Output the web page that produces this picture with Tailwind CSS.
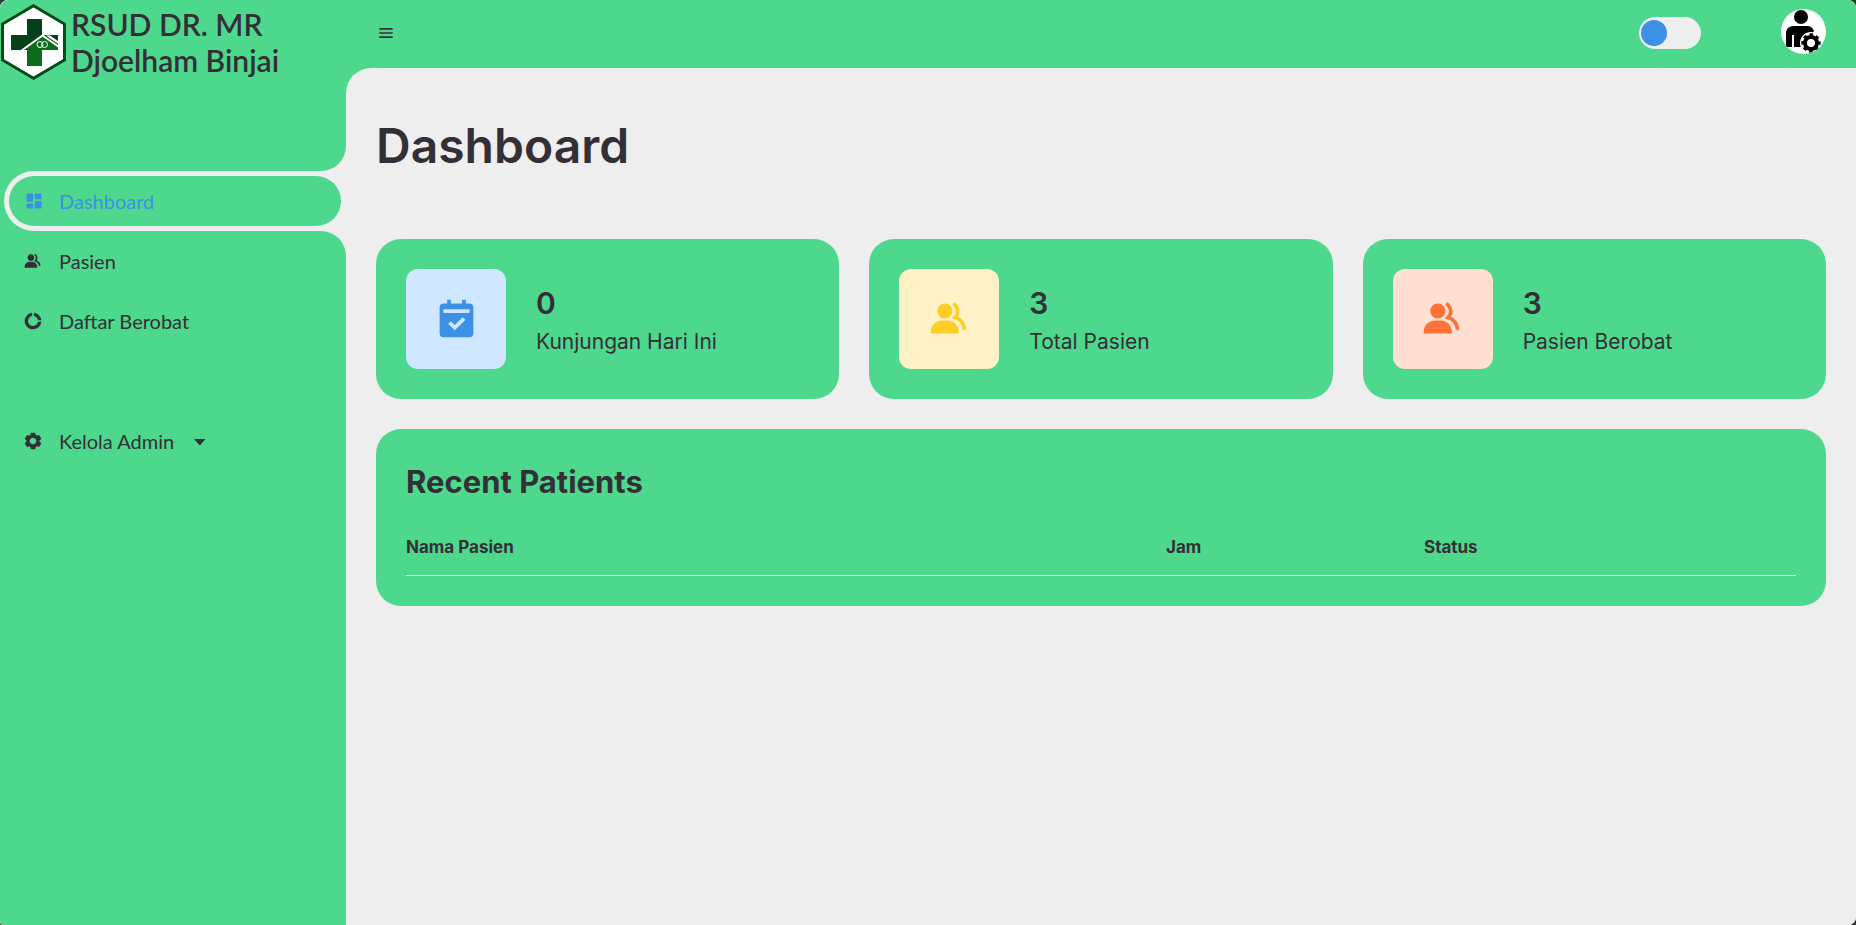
<!DOCTYPE html>
<html lang="id">
<head>
<meta charset="utf-8">
<meta name="viewport" content="width=device-width, initial-scale=1">
<title>Dashboard - RSUD DR. MR Djoelham Binjai</title>
<script src="https://cdn.jsdelivr.net/npm/@tailwindcss/browser@4"></script>
</head>
<body class="bg-[#333] text-[#342e37] font-[Inter,sans-serif]">
<svg class="hidden" aria-hidden="true">
  <symbol id="group" viewBox="0 0 24 24"><path d="M9.5 12c2.206 0 4-1.794 4-4s-1.794-4-4-4-4 1.794-4 4 1.794 4 4 4zm1.5 1H8c-3.309 0-6 2.691-6 6v1h15v-1c0-3.309-2.691-6-6-6z"/><path d="M16.604 11.048a5.67 5.67 0 0 0 .751-3.44c-.179-1.784-1.175-3.361-2.803-4.44l-1.105 1.666c1.119.742 1.8 1.799 1.918 2.974a3.693 3.693 0 0 1-1.072 2.986l-1.192 1.192 1.618.475C18.951 13.701 19 17.957 19 18h2c0-1.789-.956-5.285-4.396-6.952z"/></symbol>
</svg>
<div class="flex min-h-screen overflow-hidden rounded-lg rounded-bl-sm bg-[#eee]">

  <aside class="flex w-[346px] shrink-0 flex-col bg-[#eee] font-[Lato,sans-serif]">
    <div class="h-[171px] rounded-br-[25px] bg-[#4ed88d]">
      <a href="#" class="flex items-start gap-1 text-[30px] leading-9 font-semibold">
        <svg class="mt-1 h-[76px] w-[67px] shrink-0" viewBox="0 0 67 76" aria-hidden="true">
          <path d="M33.500 1.800 64.500 20V56L33.500 74.200 2.500 56V20Z" fill="#fff" stroke="#044a1b" stroke-width="3"/>
          <path d="M27 15H42V31H58V46H42V62H27V46H11V31H27Z" fill="#044018"/>
          <path d="M27 41 42 31 58 42V46H42V62H27Z" fill="#0a6d1b"/>
          <path d="M21 47 42.500 31.500 59 43" fill="none" stroke="#fff" stroke-width="2"/>
          <path d="M46 31.500H50L58 37V40Z" fill="#fff"/>
          <g fill="none" stroke="#fff" stroke-width="1"><circle cx="40" cy="40.500" r="3"/><circle cx="44.500" cy="40.500" r="3"/></g>
        </svg>
        <span class="pt-[6px]">RSUD DR. MR<br>Djoelham Binjai</span>
      </a>
    </div>
    <nav class="flex grow flex-col text-xl">
      <div class="bg-linear-to-r from-[#4ed88d] from-50% to-[#eee] to-50% pl-1">
        <div class="rounded-l-[30px] bg-[#eee] p-[5px]">
          <a href="#" aria-current="page" class="flex h-[50px] items-center gap-[15px] rounded-full bg-[#4ed88d] pl-[15px] text-[#3c91e6]">
            <svg class="size-5" viewBox="0 0 24 24" fill="currentColor" aria-hidden="true"><path d="M4 13h6a1 1 0 0 0 1-1V4a1 1 0 0 0-1-1H4a1 1 0 0 0-1 1v8a1 1 0 0 0 1 1zm-1 7a1 1 0 0 0 1 1h6a1 1 0 0 0 1-1v-4a1 1 0 0 0-1-1H4a1 1 0 0 0-1 1v4zm10 0a1 1 0 0 0 1 1h6a1 1 0 0 0 1-1v-7a1 1 0 0 0-1-1h-6a1 1 0 0 0-1 1v7zm1-10h6a1 1 0 0 0 1-1V4a1 1 0 0 0-1-1h-6a1 1 0 0 0-1 1v5a1 1 0 0 0 1 1z"/></svg>
            Dashboard
          </a>
        </div>
      </div>
      <div class="grow rounded-tr-[25px] bg-[#4ed88d] pl-[23px]">
        <a href="#" class="flex h-[60px] items-center gap-4">
          <svg class="size-5" fill="currentColor" aria-hidden="true"><use href="#group"/></svg>
          Pasien
        </a>
        <a href="#" class="flex h-[60px] items-center gap-4">
          <svg class="size-5" viewBox="0 0 24 24" fill="currentColor" aria-hidden="true"><path d="M13 6c2.507.423 4.577 2.493 5 5h4c-.471-4.717-4.283-8.529-9-9v4z"/><path d="M18 13c-.478 2.833-2.982 4.949-5.949 4.949-3.309 0-6-2.691-6-6C6.051 8.982 8.167 6.478 11 6V2c-5.046.504-8.949 4.773-8.949 9.949 0 5.514 4.486 10 10 10 5.176 0 9.445-3.903 9.949-8.949h-4z"/></svg>
          Daftar Berobat
        </a>
        <button type="button" class="mt-[60px] flex h-[60px] items-center gap-4">
          <svg class="size-5" viewBox="0 0 24 24" fill="currentColor" aria-hidden="true"><path d="m2.344 15.271 2 3.46a1 1 0 0 0 1.366.365l1.396-.806c.58.457 1.221.832 1.895 1.112V21a1 1 0 0 0 1 1h4a1 1 0 0 0 1-1v-1.598a8.094 8.094 0 0 0 1.895-1.112l1.396.806c.477.275 1.091.11 1.366-.365l2-3.46a1.004 1.004 0 0 0-.365-1.366l-1.372-.793a7.683 7.683 0 0 0-.002-2.224l1.372-.793c.476-.275.641-.89.365-1.366l-2-3.46a1 1 0 0 0-1.366-.365l-1.396.806A8.034 8.034 0 0 0 15 4.598V3a1 1 0 0 0-1-1h-4a1 1 0 0 0-1 1v1.598A8.094 8.094 0 0 0 7.105 5.71L5.71 4.904a.999.999 0 0 0-1.366.365l-2 3.46a1.004 1.004 0 0 0 .365 1.366l1.372.793a7.683 7.683 0 0 0 0 2.224l-1.372.793c-.476.275-.641.89-.365 1.366zM12 8c2.206 0 4 1.794 4 4s-1.794 4-4 4-4-1.794-4-4 1.794-4 4-4z"/></svg>
          Kelola Admin
          <svg class="size-5" viewBox="0 0 20 20" fill="currentColor" aria-hidden="true"><path d="M4 8H15.500L9.800 14.500Z"/></svg>
        </button>
      </div>
    </nav>
  </aside>

  <div class="flex min-w-0 grow flex-col bg-[#4ed88d]">
    <header class="flex h-[68px] items-center px-[30px] pb-[2px]">
      <button type="button" aria-label="Menu"><svg class="size-5" viewBox="0 0 24 24" fill="currentColor" aria-hidden="true"><path d="M4 6h16v2H4zM4 11h16v2H4zM4 16h16v2H4z"/></svg></button>
      <input type="checkbox" aria-label="Mode gelap" class="ml-auto h-8 w-[62px] appearance-none rounded-full bg-[#eee] px-[2px] py-[3px] before:block before:size-[26px] before:rounded-full before:bg-[#3c91e6] checked:before:ml-auto">
      <a href="#" aria-label="Profil" class="mb-1 ml-20 size-[45px] overflow-hidden rounded-full bg-white">
        <svg class="size-full" viewBox="0 0 45 45" aria-hidden="true">
          <circle cx="20" cy="8" r="7"/>
          <path d="M5 38V25q0-8 8-8H26q5 0 7 5L20 38H13V26H11V38Z"/>
          <circle cx="30" cy="34" r="11" fill="#fff"/>
          <circle cx="30" cy="34" r="6" fill="none" stroke="#000" stroke-width="4"/>
          <circle cx="30" cy="34" r="8.400" fill="none" stroke="#000" stroke-width="2.600" stroke-dasharray="3.600 2.997" stroke-dashoffset="1.800"/>
        </svg>
      </a>
    </header>

    <main class="grow rounded-tl-[25px] bg-[#eee] px-[30px] pt-12 pb-9">
      <h1 class="text-5xl leading-[60px] font-semibold">Dashboard</h1>

      <ul class="mt-[63px] grid grid-cols-3 gap-[30px]">
        <li class="flex items-center gap-[30px] rounded-[25px] bg-[#4ed88d] p-[30px]">
          <span class="flex size-[100px] shrink-0 items-center justify-center rounded-xl bg-[#cfe8ff] pb-[2px] text-[#3c91e6]">
            <svg class="size-[45px]" viewBox="0 0 24 24" fill="currentColor" fill-rule="evenodd" aria-hidden="true"><path d="M19 4h-2V2h-2v2H9V2H7v2H5c-1.100 0-2 .9-2 2v14c0 1.100.9 2 2 2h14c1.100 0 2-.9 2-2V6c0-1.100-.9-2-2-2zM5 9V7h14v2zM11.100 18.200 7.600 14.900 9 13.500 11.100 15.400 15.300 11.300 16.800 12.700z"/></svg>
          </span>
          <span class="flex flex-col gap-[3px] pt-[7px]">
            <strong class="text-[30px] leading-9 font-semibold">0</strong>
            <span class="text-[21px] leading-9">Kunjungan Hari Ini</span>
          </span>
        </li>
        <li class="flex items-center gap-[30px] rounded-[25px] bg-[#4ed88d] p-[30px]">
          <span class="flex size-[100px] shrink-0 items-center justify-center rounded-xl bg-[#fff2c6] pb-[2px] text-[#ffce26]">
            <svg class="size-[45px]" fill="currentColor" aria-hidden="true"><use href="#group"/></svg>
          </span>
          <span class="flex flex-col gap-[3px] pt-[7px]">
            <strong class="text-[30px] leading-9 font-semibold">3</strong>
            <span class="text-[21px] leading-9">Total Pasien</span>
          </span>
        </li>
        <li class="flex items-center gap-[30px] rounded-[25px] bg-[#4ed88d] p-[30px]">
          <span class="flex size-[100px] shrink-0 items-center justify-center rounded-xl bg-[#ffe0d3] pb-[2px] text-[#fd7238]">
            <svg class="size-[45px]" fill="currentColor" aria-hidden="true"><use href="#group"/></svg>
          </span>
          <span class="flex flex-col gap-[3px] pt-[7px]">
            <strong class="text-[30px] leading-9 font-semibold">3</strong>
            <span class="text-[21px] leading-9">Pasien Berobat</span>
          </span>
        </li>
      </ul>

      <section class="mt-[30px] rounded-[25px] bg-[#4ed88d] p-[30px]">
        <h2 class="text-[31px] leading-[45px] font-bold">Recent Patients</h2>
        <table class="mt-[31px] w-full text-left text-[17px]">
          <thead>
            <tr class="border-b border-[#eee]">
              <th scope="col" class="w-[760px] pb-4 leading-6 font-bold">Nama Pasien</th>
              <th scope="col" class="w-[258px] pb-4 leading-6 font-bold">Jam</th>
              <th scope="col" class="pb-4 leading-6 font-bold">Status</th>
            </tr>
          </thead>
        </table>
      </section>
    </main>
  </div>
</div>
</body>
</html>
